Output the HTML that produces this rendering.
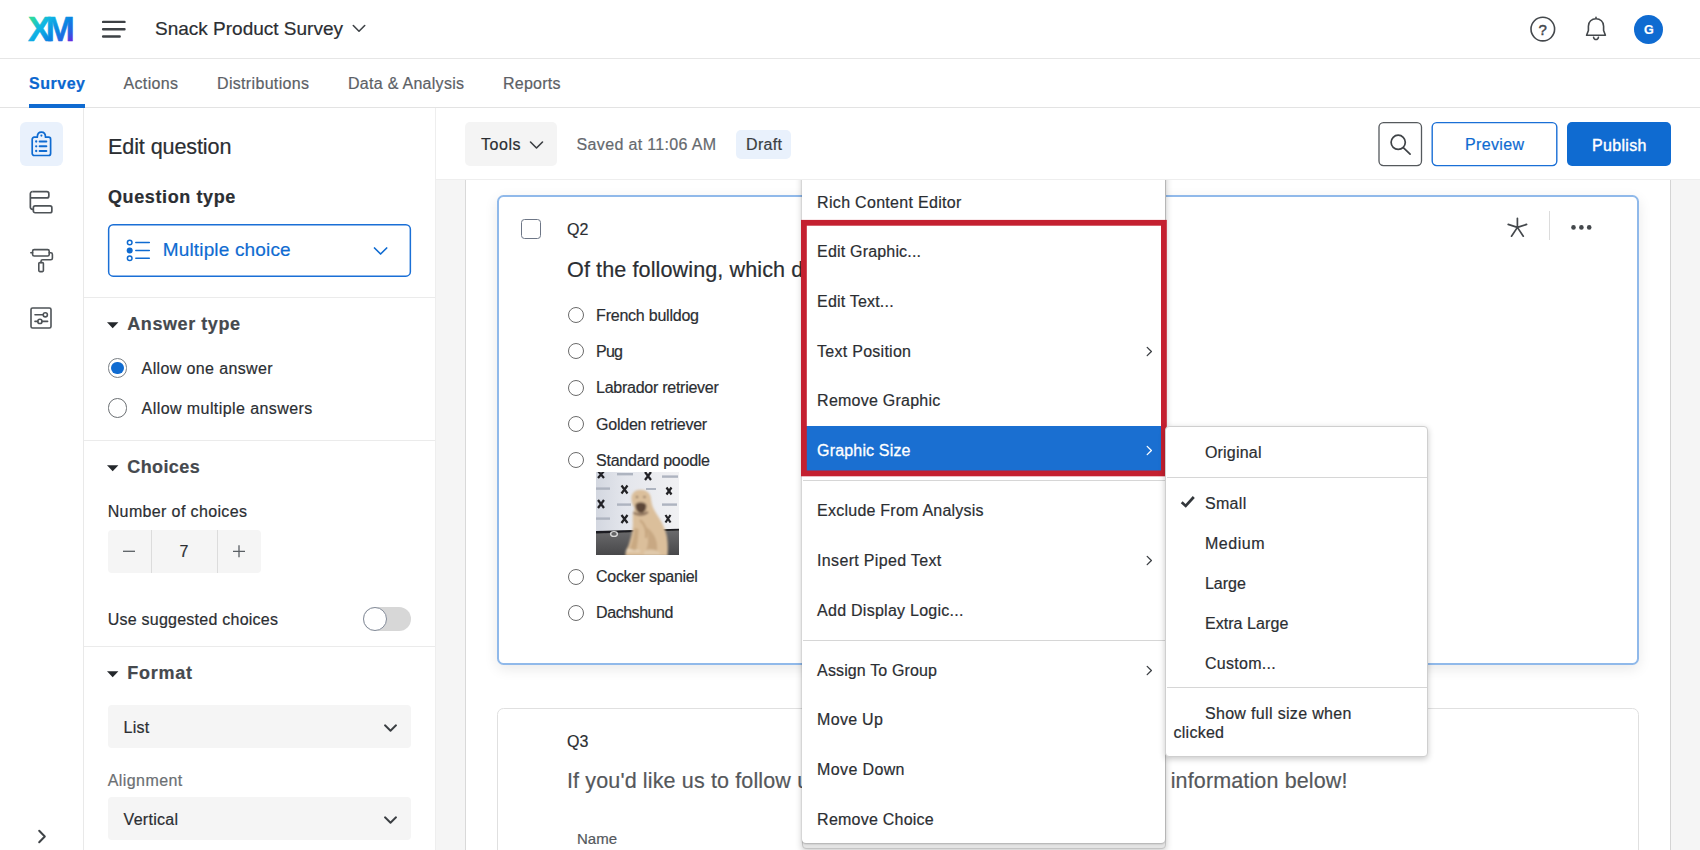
<!DOCTYPE html>
<html lang="en">
<head>
<meta charset="utf-8">
<title>Snack Product Survey</title>
<style>
*{box-sizing:border-box;margin:0;padding:0}
html,body{width:1700px;height:850px;overflow:hidden;background:#fff}
body{font-family:"Liberation Sans",sans-serif;color:#32363a;position:relative;font-size:16px}
.a{position:absolute}
.t{position:absolute;white-space:nowrap;line-height:1;-webkit-text-stroke:0.2px}
svg{position:absolute;overflow:visible}
#hdr{position:absolute;left:0;top:0;width:1700px;height:59px;background:#fff;border-bottom:1px solid #e6e6e6}
#tabs{position:absolute;left:0;top:59px;width:1700px;height:49px;background:#fff;border-bottom:1px solid #e3e3e3}
#rail{position:absolute;left:0;top:108px;width:84px;height:742px;background:#fff;border-right:1px solid #e9e9e9}
#panel{position:absolute;left:84px;top:108px;width:352px;height:742px;background:#fff;border-right:1px solid #eeeeee}
#canvas{position:absolute;left:436px;top:108px;width:1264px;height:742px;background:#f5f5f5}
#block{position:absolute;left:465px;top:108px;width:1206px;height:742px;background:#fff;border-left:1px solid #d9d9d9;border-right:1px solid #d4d4d4}
#toolbar{position:absolute;left:436px;top:108px;width:1264px;height:72px;background:#fff;border-bottom:1px solid #eeeeee}
.sel{position:absolute;background:#f5f5f5;border-radius:4px}
.sep{position:absolute;height:1px;background:#ebebeb}
.radio{position:absolute;width:16px;height:16px;border:1px solid #6b6b6b;border-radius:50%;background:#fff}
</style>
</head>
<body>

<div id="hdr"></div>
<svg style="left:28px;top:17px" width="46" height="24" viewBox="0 0 46 24">
<defs><linearGradient id="xmg" gradientUnits="userSpaceOnUse" x1="6" y1="-3" x2="38" y2="30"><stop offset="0.05" stop-color="#2dd8a0"/><stop offset="0.3" stop-color="#10b6e4"/><stop offset="0.62" stop-color="#0a86e2"/><stop offset="0.85" stop-color="#2a5ee0"/><stop offset="1" stop-color="#6a26e0"/></linearGradient></defs>
<text x="0" y="23.9" font-family="Liberation Sans, sans-serif" font-weight="bold" font-size="34.8" fill="url(#xmg)" stroke="url(#xmg)" stroke-width="0.5">X<tspan dx="-5.4">M</tspan></text></svg>
<svg style="left:101px;top:20px" width="26" height="19" viewBox="0 0 26 19"><g stroke="#3d4145" stroke-width="2.4" stroke-linecap="round"><path d="M2.1 1.9H23.5M2.1 9.2H23.5M2.1 16.5H18.7"/></g></svg>
<div class="t" style="left:155.0px;top:19.2px;font-size:19px;color:#2b2e32;letter-spacing:0.001px;">Snack Product Survey</div>
<svg style="left:352px;top:24px" width="14" height="9" viewBox="0 0 14 9"><path d="M1.3 1.5L7 7.2L12.7 1.5" fill="none" stroke="#3f4347" stroke-width="1.6" stroke-linecap="round" stroke-linejoin="round"/></svg>
<svg style="left:1530px;top:16px" width="26" height="26" viewBox="0 0 26 26"><circle cx="12.8" cy="13.1" r="11.8" fill="none" stroke="#44484c" stroke-width="1.6"/></svg>
<div class="t" style="left:1538.5px;top:21.7px;font-size:15px;color:#44484c;-webkit-text-stroke:0.45px #44484c;">?</div>
<svg style="left:1584px;top:16px" width="24" height="26" viewBox="0 0 24 26"><path d="M12 1.2V2.6M2.6 19.3H21.4L19.6 14.5V10.2C19.6 5.6 16.2 2.8 12 2.8C7.8 2.8 4.4 5.6 4.4 10.2V14.5Z M9.6 21.3C9.9 22.7 10.8 23.5 12 23.5C13.2 23.5 14.1 22.7 14.4 21.3" fill="none" stroke="#44484c" stroke-width="1.6" stroke-linecap="round" stroke-linejoin="round"/></svg>
<div class="a" style="left:1634.2px;top:14.5px;width:29px;height:29px;border-radius:50%;background:#0f6bd1"></div>
<div class="t" style="left:1644.1px;top:23.8px;font-size:12.5px;font-weight:bold;color:#fff;">G</div>
<div id="tabs"></div>
<div class="t" style="left:29.0px;top:76.3px;font-size:16px;font-weight:bold;color:#0b67cf;letter-spacing:0.526px;">Survey</div>
<div class="a" style="left:29px;top:104px;width:56px;height:3.5px;background:#0f6bd1"></div>
<div class="t" style="left:123.5px;top:76.3px;font-size:16px;color:#5c6166;letter-spacing:0.338px;">Actions</div>
<div class="t" style="left:217.0px;top:76.3px;font-size:16px;color:#5c6166;letter-spacing:0.330px;">Distributions</div>
<div class="t" style="left:348.0px;top:76.3px;font-size:16px;color:#5c6166;letter-spacing:0.282px;">Data &amp; Analysis</div>
<div class="t" style="left:503.0px;top:76.3px;font-size:16px;color:#5c6166;letter-spacing:0.246px;">Reports</div>
<div id="rail"></div>
<div class="a" style="left:20px;top:122px;width:43px;height:44px;border-radius:6px;background:#e9f1fc"></div>
<svg style="left:30px;top:131px" width="23" height="26" viewBox="0 0 23 26"><g fill="none" stroke="#0f6bd1" stroke-width="1.7" stroke-linejoin="round" stroke-linecap="round">
<path d="M4.2 6.2H7.3C7.3 3.2 9 1.1 11.4 1.1C13.8 1.1 15.5 3.2 15.5 6.2H18.6A2 2 0 0 1 20.6 8.2V22.5A2 2 0 0 1 18.6 24.5H4.2A2 2 0 0 1 2.2 22.5V8.2A2 2 0 0 1 4.2 6.2Z"/>
<path d="M9.6 10.5H16.4M9.6 15.3H16.4M9.6 20H16.4" stroke-width="1.9"/></g>
<g fill="#0f6bd1"><circle cx="11.4" cy="4.6" r="1.05"/><circle cx="6.2" cy="10.5" r="1.15"/><circle cx="6.2" cy="15.3" r="1.15"/><circle cx="6.2" cy="20" r="1.15"/></g></svg>
<svg style="left:29px;top:189px" width="26" height="26" viewBox="0 0 26 26"><g fill="none" stroke="#4e5357" stroke-width="1.7" stroke-linejoin="round">
<path d="M3.35 2.65H17.85A2 2 0 0 1 19.85 4.65V6.95A2 2 0 0 1 17.85 8.95H1.35"/>
<path d="M3.35 2.65A2 2 0 0 0 1.35 4.65V18.3A2 2 0 0 0 3.35 20.3H4.35"/>
<rect x="4.35" y="16.95" width="18.5" height="6.8" rx="1.8"/></g></svg>
<svg style="left:30px;top:248px" width="24" height="25" viewBox="0 0 24 25"><g fill="none" stroke="#4e5357" stroke-width="1.6" stroke-linejoin="round" stroke-linecap="round">
<rect x="2.6" y="1.6" width="16.6" height="6.4" rx="1.6"/><path d="M0.8 4.8H2.6M19.2 4.8H20.8C21.7 4.8 22.4 5.5 22.4 6.4V10.2C22.4 11.1 21.7 11.8 20.8 11.8H12.6C11.7 11.8 11 12.5 11 13.4V14.6"/>
<rect x="8.8" y="14.6" width="4.6" height="9" rx="1"/></g></svg>
<svg style="left:30px;top:307px" width="22" height="22" viewBox="0 0 22 22"><g fill="none" stroke="#4e5357" stroke-width="1.6" stroke-linejoin="round" stroke-linecap="round">
<rect x="1" y="1" width="20" height="20" rx="1.6"/><path d="M5 7.8H13.2M5 14.4H7.8M12 14.4H17.6"/><circle cx="15.3" cy="7.8" r="2.1"/><circle cx="9.9" cy="14.4" r="2.1"/></g></svg>
<svg style="left:37px;top:829px" width="10" height="15" viewBox="0 0 10 15"><path d="M2.2 1.7L7.8 7.5L2.2 13.3" fill="none" stroke="#3f4347" stroke-width="2" stroke-linecap="round" stroke-linejoin="round"/></svg>
<div id="panel"></div>
<div class="t" style="left:108.0px;top:136.1px;font-size:21.6px;color:#2b2e32;letter-spacing:-0.116px;">Edit question</div>
<div class="t" style="left:108.0px;top:187.8px;font-size:18px;font-weight:bold;color:#2b2e32;letter-spacing:0.607px;">Question type</div>
<svg style="left:100px;top:220px" width="320" height="62"><rect x="8.65" y="4.75" width="301.7" height="51.4" rx="4.5" fill="#fff" stroke="#1a6fd6" stroke-width="1.5"/></svg>
<svg style="left:126px;top:239px" width="25" height="23" viewBox="0 0 25 23"><g fill="none" stroke="#0f6bd1" stroke-width="1.5" stroke-linecap="round"><circle cx="3.7" cy="3.5" r="2.3"/><circle cx="3.7" cy="19.3" r="2.3"/><path d="M9.8 3.5H23.3M9.8 11.4H23.3M9.8 19.3H23.3"/></g><circle cx="3.7" cy="11.4" r="3" fill="#0f6bd1"/></svg>
<div class="t" style="left:162.7px;top:240.1px;font-size:19px;color:#0f6bd1;letter-spacing:0.166px;">Multiple choice</div>
<svg style="left:373px;top:246px" width="15" height="10" viewBox="0 0 15 10"><path d="M1.5 2L7.6 8L13.7 2" fill="none" stroke="#0f6bd1" stroke-width="1.7" stroke-linecap="round" stroke-linejoin="round"/></svg>
<div class="sep" style="left:84px;top:297px;width:351px"></div>
<svg style="left:107px;top:321.6px" width="12" height="6" viewBox="0 0 12 6"><path d="M0 0.2H11.4L5.7 6.2Z" fill="#24272b"/></svg>
<div class="t" style="left:127.3px;top:314.8px;font-size:18px;font-weight:bold;color:#45494e;letter-spacing:0.566px;">Answer type</div>
<div class="a" style="left:107.7px;top:358.2px;width:19.6px;height:19.6px;border:1px solid #7a7f85;border-radius:50%;background:#fff"></div>
<div class="a" style="left:111.3px;top:361.8px;width:12.4px;height:12.4px;border-radius:50%;background:#0f6bd1"></div>
<div class="t" style="left:141.6px;top:360.7px;font-size:16px;color:#2b2e32;letter-spacing:0.373px;">Allow one answer</div>
<div class="a" style="left:107.7px;top:398.1px;width:19.6px;height:19.6px;border:1px solid #6b6f73;border-radius:50%;background:#fff"></div>
<div class="t" style="left:141.6px;top:400.6px;font-size:16px;color:#2b2e32;letter-spacing:0.422px;">Allow multiple answers</div>
<div class="sep" style="left:84px;top:440px;width:351px"></div>
<svg style="left:107px;top:465.2px" width="12" height="6" viewBox="0 0 12 6"><path d="M0 0.2H11.4L5.7 6.2Z" fill="#24272b"/></svg>
<div class="t" style="left:127.3px;top:458.3px;font-size:18px;font-weight:bold;color:#45494e;letter-spacing:0.396px;">Choices</div>
<div class="t" style="left:107.7px;top:504.1px;font-size:16px;color:#2b2e32;letter-spacing:0.369px;">Number of choices</div>
<div class="sel" style="left:107.7px;top:529.5px;width:153.5px;height:43.3px"></div>
<div class="a" style="left:151px;top:529.5px;width:1px;height:43.3px;background:#dcdcdc"></div>
<div class="a" style="left:216.5px;top:529.5px;width:1px;height:43.3px;background:#dcdcdc"></div>
<svg style="left:122px;top:544px" width="14" height="14" viewBox="0 0 14 14"><path d="M1 7.3H13" stroke="#5a5f64" stroke-width="1.3" fill="none"/></svg>
<svg style="left:232px;top:544px" width="14" height="14" viewBox="0 0 14 14"><path d="M1 7.3H13M7 1.3V13.3" stroke="#5a5f64" stroke-width="1.3" fill="none"/></svg>
<div class="t" style="left:179.6px;top:543.5px;font-size:16px;color:#2b2e32;">7</div>
<div class="t" style="left:107.7px;top:611.9px;font-size:16px;color:#2b2e32;letter-spacing:0.243px;">Use suggested choices</div>
<div class="a" style="left:362.5px;top:607px;width:48px;height:24px;border-radius:12px;background:#d7d7d7"></div>
<div class="a" style="left:362.5px;top:607px;width:24px;height:24px;border-radius:50%;background:#fff;border:1.2px solid #838b99"></div>
<div class="sep" style="left:84px;top:645.5px;width:351px"></div>
<svg style="left:107px;top:670.6px" width="12" height="6" viewBox="0 0 12 6"><path d="M0 0.2H11.4L5.7 6.2Z" fill="#24272b"/></svg>
<div class="t" style="left:127.3px;top:663.8px;font-size:18px;font-weight:bold;color:#45494e;letter-spacing:0.739px;">Format</div>
<div class="sel" style="left:107.7px;top:704.6px;width:303px;height:43.4px"></div>
<div class="t" style="left:123.6px;top:720.1px;font-size:16px;color:#2b2e32;letter-spacing:0.267px;">List</div>
<svg style="left:383px;top:722.5px" width="15" height="10" viewBox="0 0 15 10"><path d="M2 2.3L7.5 7.7L13 2.3" fill="none" stroke="#3a3e42" stroke-width="1.9" stroke-linecap="round" stroke-linejoin="round"/></svg>
<div class="t" style="left:107.7px;top:772.7px;font-size:16px;color:#6b6f73;letter-spacing:0.431px;">Alignment</div>
<div class="sel" style="left:107.7px;top:796.6px;width:303px;height:43.4px"></div>
<div class="t" style="left:123.6px;top:811.5px;font-size:16px;color:#2b2e32;letter-spacing:0.290px;">Vertical</div>
<svg style="left:383px;top:814.5px" width="15" height="10" viewBox="0 0 15 10"><path d="M2 2.3L7.5 7.7L13 2.3" fill="none" stroke="#3a3e42" stroke-width="1.9" stroke-linecap="round" stroke-linejoin="round"/></svg>
<div id="canvas"></div><div id="block"></div>
<div class="a" style="left:497px;top:195px;width:1142px;height:470px;border:2px solid #90b9ea;border-radius:6.5px;background:#fff;box-shadow:0 4px 14px rgba(0,0,0,.09)"></div>
<div class="a" style="left:521px;top:219px;width:19.5px;height:19.5px;border:1.3px solid #6d7686;border-radius:3.5px;background:#fff"></div>
<div class="t" style="left:567.0px;top:221.7px;font-size:16px;color:#2b2e32;letter-spacing:-0.044px;">Q2</div>
<div class="t" style="left:567.0px;top:258.5px;font-size:21.6px;color:#2b2e32;letter-spacing:0.095px;">Of the following, which dog breed is your favorite?</div>
<div class="radio" style="left:567.6px;top:307.2px"></div>
<div class="t" style="left:596.1px;top:308.0px;font-size:16px;color:#2b2e32;letter-spacing:-0.227px;">French bulldog</div>
<div class="radio" style="left:567.6px;top:343.4px"></div>
<div class="t" style="left:596.1px;top:344.2px;font-size:16px;color:#2b2e32;letter-spacing:-0.785px;">Pug</div>
<div class="radio" style="left:567.6px;top:379.6px"></div>
<div class="t" style="left:596.1px;top:380.4px;font-size:16px;color:#2b2e32;letter-spacing:-0.263px;">Labrador retriever</div>
<div class="radio" style="left:567.6px;top:415.8px"></div>
<div class="t" style="left:596.1px;top:416.6px;font-size:16px;color:#2b2e32;letter-spacing:-0.241px;">Golden retriever</div>
<div class="radio" style="left:567.6px;top:452.0px"></div>
<div class="t" style="left:596.1px;top:452.8px;font-size:16px;color:#2b2e32;letter-spacing:-0.252px;">Standard poodle</div>
<div class="radio" style="left:567.6px;top:568.5px"></div>
<div class="t" style="left:596.1px;top:569.3px;font-size:16px;color:#2b2e32;letter-spacing:-0.310px;">Cocker spaniel</div>
<div class="radio" style="left:567.6px;top:604.5px"></div>
<div class="t" style="left:596.1px;top:605.3px;font-size:16px;color:#2b2e32;letter-spacing:-0.456px;">Dachshund</div>
<svg style="left:596px;top:471.7px" width="83" height="83" viewBox="0 0 83 83">
<defs><linearGradient id="wall" x1="0" y1="0" x2="1" y2="0"><stop offset="0" stop-color="#d3d7e0"/><stop offset="0.35" stop-color="#e4e6ec"/><stop offset="1" stop-color="#f1f1f3"/></linearGradient>
<linearGradient id="flr" x1="0" y1="0" x2="0" y2="1"><stop offset="0" stop-color="#6c6c6e"/><stop offset="1" stop-color="#48484a"/></linearGradient>
<filter id="bl" x="-20%" y="-20%" width="140%" height="140%"><feGaussianBlur stdDeviation="0.7"/></filter>
<filter id="bl2" x="-20%" y="-20%" width="140%" height="140%"><feGaussianBlur stdDeviation="1"/></filter>
<clipPath id="dc"><rect width="83" height="83"/></clipPath></defs>
<g clip-path="url(#dc)">
<rect width="83" height="83" fill="url(#wall)"/>
<path d="M0 59.5L83 57.2V83H0Z" fill="url(#flr)"/>
<path d="M0 59L83 56.8V58.4L0 61.4Z" fill="#1e1e20" filter="url(#bl)"/>
<ellipse cx="18" cy="62" rx="3.4" ry="2.4" fill="none" stroke="#d8d8d8" stroke-width="1.4" filter="url(#bl)"/>
<g stroke="#222226" stroke-width="2.2" stroke-linecap="butt" filter="url(#bl)"><path d="M2 -1L8 6M8 -1L2 6"/><path d="M49 0L55 8M55 0L49 8"/><path d="M25.5 13.5L31.5 21.5M31.5 13.5L25.5 21.5"/><path d="M70.5 15.5L75.5 22.5M75.5 15.5L70.5 22.5"/><path d="M2 28L8 36M8 28L2 36"/><path d="M25.5 43L31.5 51M31.5 43L25.5 51"/><path d="M69.5 43L74.5 50.5M74.5 43L69.5 50.5"/></g>
<g fill="#aeb4c0" filter="url(#bl)"><rect x="21" y="1" width="16" height="2.4"/><rect x="66" y="3.4" width="16" height="2.4"/><rect x="0" y="15.4" width="14" height="2.4"/><rect x="50" y="16" width="10" height="2"/><rect x="21" y="31.4" width="14" height="2.4"/><rect x="66" y="31.4" width="15" height="2.4"/><rect x="0" y="45.4" width="14" height="2.4"/></g>
<g filter="url(#bl2)">
<path d="M35.5 27C35 21.5 39 17.6 45 17.8C51 18 55 22 55 27.5C55.5 31 56 34 58.5 38.5C63 46 69.5 55 71 65C72 72 72 78 71.5 84H29.5C29 80 30.5 77 32.5 73.5C34.5 67 36.5 60 36.8 54C37 49 36.5 45 37 41.5C37.5 39 38 37.5 38.5 36C36.5 33.5 35.8 30.5 35.5 27Z" fill="#dbbf9b"/>
<path d="M38.5 56C38 64 36 72 33 79L40 80C41.5 72 42.5 64 42.5 57Z" fill="#c9a982"/>
<path d="M50 55C57 59 62.5 68 61 80L48 82C53 76 53 64 50 55Z" fill="#c8a883"/>
<path d="M44 48C49 52 51 58 50 66" stroke="#c4a37d" stroke-width="2" fill="none"/>
<path d="M39.5 32.5C41.5 29.5 47.5 29.3 50.2 32.6C51 37 48.5 41.6 44.5 41C41 40.5 39 36.5 39.5 32.5Z" fill="#5d4638"/>
<path d="M37.5 40.5C41 43.5 48 43.5 52 40" stroke="#7a5f4b" stroke-width="2" fill="none"/>
<ellipse cx="41" cy="25" rx="1.1" ry="1" fill="#6b5242"/><ellipse cx="48.5" cy="25" rx="1.1" ry="1" fill="#6b5242"/>
<path d="M30 78C32 76.5 36 76.5 38 78.5C40 77 44 77.5 45 80L30 80Z" fill="#e6d3b8"/>
<path d="M48 79C52 76.5 60 77 64 80.5L64 83H48Z" fill="#e0c9aa"/>
</g></g>
</svg>
<div class="a" style="left:497px;top:707.6px;width:1142px;height:200px;border:1px solid #e0e0e0;border-radius:6.5px;background:#fff"></div>
<div class="t" style="left:567.0px;top:733.8px;font-size:16px;color:#2b2e32;letter-spacing:-0.044px;">Q3</div>
<div class="t" style="left:567.0px;top:771.2px;font-size:21.5px;color:#55585b;letter-spacing:0.139px;">If you'd like us to follow up with you, please enter your contact information below!</div>
<div class="t" style="left:577.0px;top:830.6px;font-size:15px;color:#54585c;letter-spacing:-0.004px;">Name</div>
<svg style="left:1507px;top:217px" width="21" height="21" viewBox="0 0 21 21"><path d="M10.4 10.4V1.3M10.4 10.4L1.2 7.4M10.4 10.4L19.6 7.4M10.4 10.4L4.5 19.2M10.4 10.4L16.3 19.2" stroke="#44484c" stroke-width="1.7" fill="none" stroke-linecap="round"/></svg>
<div class="a" style="left:1549px;top:211px;width:1px;height:28.5px;background:#dcdcdc"></div>
<svg style="left:1570px;top:224px" width="22" height="7" viewBox="0 0 22 7"><g fill="#44484c"><circle cx="3.5" cy="3.4" r="2.3"/><circle cx="11.4" cy="3.4" r="2.3"/><circle cx="19.2" cy="3.4" r="2.3"/></g></svg>
<div class="a" style="left:801.5px;top:150px;width:364px;height:698.5px;background:#e4e4e4;border:1px solid #c4c4c4;border-radius:4px;box-shadow:0 2px 7px rgba(0,0,0,.22)"></div>
<div class="a" style="left:802.3px;top:150px;width:362.4px;height:693px;background:#fff;border-radius:4px;box-shadow:0 1px 2px rgba(0,0,0,.25)"></div>
<div class="a" style="left:802.5px;top:426.2px;width:362px;height:45px;background:#1a6fd1"></div>
<div class="t" style="left:817.1px;top:194.5px;font-size:16px;color:#2b2e32;letter-spacing:0.309px;">Rich Content Editor</div>
<div class="t" style="left:817.1px;top:244.3px;font-size:16px;color:#2b2e32;letter-spacing:0.180px;">Edit Graphic...</div>
<div class="t" style="left:817.1px;top:293.9px;font-size:16px;color:#2b2e32;letter-spacing:0.190px;">Edit Text...</div>
<div class="t" style="left:817.1px;top:343.5px;font-size:16px;color:#2b2e32;letter-spacing:0.265px;">Text Position</div>
<svg style="left:1145px;top:344.5px" width="9" height="13" viewBox="0 0 9 13"><path d="M2.2 2.4L6.4 6.5L2.2 10.6" fill="none" stroke="#3a3e42" stroke-width="1.3" stroke-linecap="round" stroke-linejoin="round"/></svg>
<div class="t" style="left:817.1px;top:393.1px;font-size:16px;color:#2b2e32;letter-spacing:0.242px;">Remove Graphic</div>
<div class="t" style="left:817.1px;top:442.8px;font-size:16px;color:#fff;letter-spacing:0.164px;-webkit-text-stroke:0.3px #fff;">Graphic Size</div>
<svg style="left:1145px;top:443.8px" width="9" height="13" viewBox="0 0 9 13"><path d="M2.2 2.4L6.4 6.5L2.2 10.6" fill="none" stroke="#fff" stroke-width="1.3" stroke-linecap="round" stroke-linejoin="round"/></svg>
<div class="t" style="left:817.1px;top:503.4px;font-size:16px;color:#2b2e32;letter-spacing:0.233px;">Exclude From Analysis</div>
<div class="t" style="left:817.1px;top:553.1px;font-size:16px;color:#2b2e32;letter-spacing:0.326px;">Insert Piped Text</div>
<svg style="left:1145px;top:554.1px" width="9" height="13" viewBox="0 0 9 13"><path d="M2.2 2.4L6.4 6.5L2.2 10.6" fill="none" stroke="#3a3e42" stroke-width="1.3" stroke-linecap="round" stroke-linejoin="round"/></svg>
<div class="t" style="left:817.1px;top:602.8px;font-size:16px;color:#2b2e32;letter-spacing:0.257px;">Add Display Logic...</div>
<div class="t" style="left:817.1px;top:663.0px;font-size:16px;color:#2b2e32;letter-spacing:0.129px;">Assign To Group</div>
<svg style="left:1145px;top:664.0px" width="9" height="13" viewBox="0 0 9 13"><path d="M2.2 2.4L6.4 6.5L2.2 10.6" fill="none" stroke="#3a3e42" stroke-width="1.3" stroke-linecap="round" stroke-linejoin="round"/></svg>
<div class="t" style="left:817.1px;top:712.0px;font-size:16px;color:#2b2e32;letter-spacing:0.279px;">Move Up</div>
<div class="t" style="left:817.1px;top:762.2px;font-size:16px;color:#2b2e32;letter-spacing:0.365px;">Move Down</div>
<div class="t" style="left:817.1px;top:811.6px;font-size:16px;color:#2b2e32;letter-spacing:0.231px;">Remove Choice</div>
<div class="a" style="left:802.5px;top:480.3px;width:362px;height:1px;background:#d6d6d6"></div>
<div class="a" style="left:802.5px;top:639.6px;width:362px;height:1px;background:#d6d6d6"></div>
<svg style="left:0;top:0" width="1700" height="850"><rect x="803.9" y="222.8" width="360" height="250.6" fill="none" stroke="#c42030" stroke-width="5.8"/></svg>
<div class="a" style="left:1165px;top:426px;width:262.5px;height:330.5px;background:#fff;border:1px solid #cfcfcf;border-radius:4px;box-shadow:0 2px 6px rgba(0,0,0,.22)"></div>
<div class="t" style="left:1204.9px;top:444.9px;font-size:16px;color:#2b2e32;letter-spacing:0.209px;">Original</div>
<div class="t" style="left:1204.9px;top:495.5px;font-size:16px;color:#2b2e32;letter-spacing:0.348px;">Small</div>
<div class="t" style="left:1204.9px;top:535.5px;font-size:16px;color:#2b2e32;letter-spacing:0.538px;">Medium</div>
<div class="t" style="left:1204.9px;top:575.5px;font-size:16px;color:#2b2e32;letter-spacing:-0.006px;">Large</div>
<div class="t" style="left:1204.9px;top:615.5px;font-size:16px;color:#2b2e32;letter-spacing:0.069px;">Extra Large</div>
<div class="t" style="left:1204.9px;top:656.2px;font-size:16px;color:#2b2e32;letter-spacing:0.292px;">Custom...</div>
<div class="t" style="left:1204.9px;top:705.5px;font-size:16px;color:#2b2e32;letter-spacing:0.338px;">Show full size when</div>
<div class="t" style="left:1173.5px;top:725.2px;font-size:16px;color:#2b2e32;letter-spacing:0.265px;">clicked</div>
<div class="a" style="left:1166.5px;top:477px;width:260px;height:1px;background:#d6d6d6"></div>
<div class="a" style="left:1166.5px;top:686.8px;width:260px;height:1px;background:#d6d6d6"></div>
<svg style="left:1180px;top:495px" width="16" height="14" viewBox="0 0 16 14"><path d="M1.7 7.2L5.7 10.9L13.8 2" fill="none" stroke="#33373b" stroke-width="2.7" stroke-linejoin="miter"/></svg>
<div id="toolbar"></div>
<div class="a" style="left:465px;top:122px;width:92px;height:44px;border-radius:5px;background:#f4f4f4"></div>
<div class="t" style="left:481.0px;top:137.2px;font-size:16px;color:#2b2e32;letter-spacing:0.537px;">Tools</div>
<svg style="left:529px;top:139.5px" width="15" height="10" viewBox="0 0 15 10"><path d="M1.5 2L7.5 8L13.5 2" fill="none" stroke="#3a3e42" stroke-width="1.6" stroke-linecap="round" stroke-linejoin="round"/></svg>
<div class="t" style="left:576.6px;top:137.2px;font-size:16px;color:#65696e;letter-spacing:0.336px;">Saved at 11:06 AM</div>
<div class="a" style="left:736px;top:130px;width:55px;height:28.5px;border-radius:5px;background:#e9f1fc"></div>
<div class="t" style="left:746.0px;top:137.2px;font-size:16px;color:#3a3e42;letter-spacing:0.332px;">Draft</div>
<svg style="left:1370px;top:118px" width="60" height="52"><rect x="9" y="4.6" width="42.5" height="43" rx="4.5" fill="#fff" stroke="#55595d" stroke-width="1.3"/></svg>
<svg style="left:1389px;top:133px" width="23" height="23" viewBox="0 0 23 23"><circle cx="9.2" cy="9.3" r="7.1" fill="none" stroke="#3f4347" stroke-width="1.7"/><path d="M14.3 14.6L21.1 21.2" stroke="#3f4347" stroke-width="1.7" stroke-linecap="round"/></svg>
<svg style="left:1425px;top:118px" width="140" height="52"><rect x="7.2" y="4.6" width="124.6" height="43" rx="4.5" fill="#fff" stroke="#1a6fd6" stroke-width="1.4"/></svg>
<div class="t" style="left:1465.0px;top:137.2px;font-size:16px;color:#0f6bd1;letter-spacing:0.349px;">Preview</div>
<div class="a" style="left:1566.8px;top:122px;width:104.2px;height:44px;border-radius:5px;background:#0f6bd1"></div>
<div class="t" style="left:1592.0px;top:137.9px;font-size:16px;color:#fff;letter-spacing:0.337px;-webkit-text-stroke:0.4px #fff;">Publish</div>
</body>
</html>
